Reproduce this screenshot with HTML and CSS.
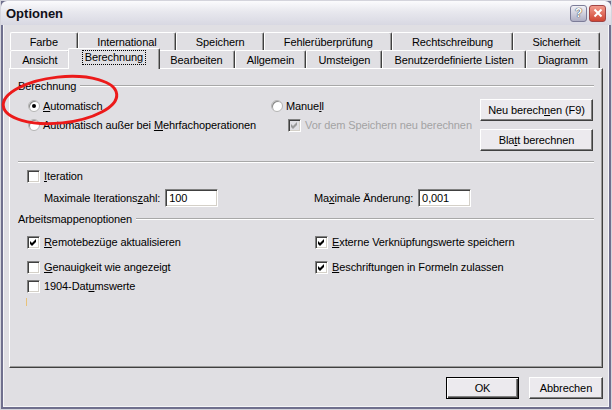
FILE: index.html
```html
<!DOCTYPE html>
<html lang="de">
<head>
  <meta charset="UTF-8">
  <meta name="viewport" content="width=device-width, initial-scale=1.0">
  <title>Optionen</title>
  <link rel="stylesheet" href="styles.css">
</head>
<body>
  <div class="window">
    <div class="titlebar">
      <span class="title">Optionen</span>
      <div class="title-buttons">
        <span class="tb-btn help">?</span>
        <span class="tb-btn close">
          <svg width="10" height="10" viewBox="0 0 10 10"><path d="M1.5 1.5 L8.5 8.5 M8.5 1.5 L1.5 8.5" stroke="#fff" stroke-width="2"/></svg>
        </span>
      </div>
    </div>

    <div class="dialog">
      <div class="tabs">
        <div class="tab-row">
          <div class="tab">Farbe</div>
          <div class="tab">International</div>
          <div class="tab">Speichern</div>
          <div class="tab">Fehlerüberprüfung</div>
          <div class="tab">Rechtschreibung</div>
          <div class="tab">Sicherheit</div>
        </div>
        <div class="tab-row">
          <div class="tab">Ansicht</div>
          <div class="tab active"><span class="focus">Berechnung</span></div>
          <div class="tab">Bearbeiten</div>
          <div class="tab">Allgemein</div>
          <div class="tab">Umsteigen</div>
          <div class="tab">Benutzerdefinierte Listen</div>
          <div class="tab">Diagramm</div>
        </div>
      </div>

      <div class="panel">
        <div class="group-title">Berechnung</div>
        <div class="calc">
          <div class="calc-left">
            <div class="opt"><span class="radio checked"></span><span><u>A</u>utomatisch</span></div>
            <div class="opt"><span class="radio"></span><span>Automatisch außer bei <u>M</u>ehrfachoperationen</span></div>
          </div>
          <div class="calc-mid">
            <div class="opt"><span class="radio"></span><span>Manue<u>l</u>l</span></div>
            <div class="opt sub disabled">
              <span class="check">
                <svg width="9" height="9" viewBox="0 0 9 9"><path d="M1 3 L3 5 L7 1 L7 4 L3 8 L1 6 Z"/></svg>
              </span>
              <span>Vor dem Speichern neu berechnen</span>
            </div>
          </div>
          <div class="calc-right">
            <div class="btn wide">Neu berech<u>n</u>en (F9)</div>
            <div class="btn wide">Bla<u>t</u>t berechnen</div>
          </div>
        </div>

        <div class="separator"></div>

        <div class="opt boxed iter"><span class="check"></span><span><u>I</u>teration</span></div>
        <div class="fields">
          <div class="field first"><span>Maximale Iterations<u>z</u>ahl:</span><span class="input">100</span></div>
          <div class="field"><span>Ma<u>x</u>imale Änderung:</span><span class="input">0,001</span></div>
        </div>

        <div class="group-title wb">Arbeitsmappenoptionen</div>
        <div class="opt-row r1">
          <div class="opt boxed">
            <span class="check"><svg width="9" height="9" viewBox="0 0 9 9"><path d="M1 3 L3 5 L7 1 L7 4 L3 8 L1 6 Z"/></svg></span>
            <span><u>R</u>emotebezüge aktualisieren</span>
          </div>
          <div class="opt boxed">
            <span class="check"><svg width="9" height="9" viewBox="0 0 9 9"><path d="M1 3 L3 5 L7 1 L7 4 L3 8 L1 6 Z"/></svg></span>
            <span><u>E</u>xterne Verknüpfungswerte speichern</span>
          </div>
        </div>
        <div class="opt-row r2">
          <div class="opt boxed"><span class="check"></span><span><u>G</u>enauigkeit wie angezeigt</span></div>
          <div class="opt boxed">
            <span class="check"><svg width="9" height="9" viewBox="0 0 9 9"><path d="M1 3 L3 5 L7 1 L7 4 L3 8 L1 6 Z"/></svg></span>
            <span><u>B</u>eschriftungen in Formeln zulassen</span>
          </div>
        </div>
        <div class="opt-row r3">
          <div class="opt boxed"><span class="check"></span><span>1904-Dat<u>u</u>mswerte</span></div>
        </div>
        <div class="caret"></div>
      </div>

      <div class="actions">
        <div class="btn default">OK</div>
        <div class="btn">Abbrechen</div>
      </div>
    </div>

    <svg class="highlight" width="612" height="410" viewBox="0 0 612 410">
      <ellipse cx="60" cy="100" rx="57" ry="23" transform="rotate(-6 60 100)" fill="none" stroke="#ec1a1a" stroke-width="3"/>
    </svg>
  </div>
</body>
</html>
```

FILE: styles.css
```css
body {
  margin: 0;
  font-family: "Liberation Sans", Arial, sans-serif;
  font-size: 11px;
  letter-spacing: -0.1px;
  color: #000;
  background-color: #ffffff;
}
u {
  text-underline-offset: 1px;
}
.window {
  position: relative;
  width: 612px;
  height: 410px;
  box-sizing: border-box;
  border: 1px solid #d4d4dc;
  background-color: #70708e;
  padding: 0 2px 2px;
  display: flex;
  flex-direction: column;
}
.titlebar {
  margin: 0 -2px;
  height: 24px;
  padding: 0 5px;
  display: flex;
  align-items: center;
  background: linear-gradient(#fbfbfd, #e8e8ee 45%, #d8d8e2);
  border-radius: 6px 6px 0 0;
}
.title {
  font-size: 13px;
  font-weight: bold;
  letter-spacing: 0;
  color: #101018;
}
.title-buttons {
  margin-left: auto;
  display: flex;
  gap: 2px;
}
.tb-btn {
  width: 15px;
  height: 15px;
  border-radius: 3px;
  display: flex;
  align-items: center;
  justify-content: center;
}
.help {
  background: linear-gradient(#f2f2f7, #aeaec4);
  border: 1px solid #7c7c98;
  color: #fff;
  font-weight: bold;
  font-size: 12px;
  text-shadow: 0 0 1px #333, 0 0 1px #333;
}
.close {
  background: linear-gradient(#f29a8c, #cf4432);
  border: 1px solid #a04444;
}
.dialog {
  flex: 1;
  background-color: #e0dfe3;
  border: 1px solid #f6f6f8;
  border-top: none;
  padding: 7px 5px 7px;
  display: flex;
  flex-direction: column;
}
.tabs {
  margin: 0 3px 0 1px;
}
.tab-row {
  display: flex;
  height: 18px;
}
.tab {
  flex: 1 1 auto;
  padding: 0 6px;
  text-align: center;
  line-height: 18px;
  border: 1px solid;
  border-color: #ffffff #404040 transparent #ffffff;
  border-bottom: none;
  border-radius: 2px 2px 0 0;
  box-shadow: inset -1px 0 #9a9a9a;
  background-color: #e0dfe3;
  white-space: nowrap;
}
.tab.active {
  position: relative;
  z-index: 1;
  margin: -2px -2px -1px;
  padding: 1px 8px 0;
  line-height: normal;
}
.focus {
  display: inline-block;
  border: 1px dotted #000;
  padding: 0 2px;
  line-height: 13px;
}
.panel {
  flex: 1;
  border: 1px solid;
  border-color: #ffffff #404040 #404040 #ffffff;
  box-shadow: inset -1px -1px #9a9a9a;
  padding: 10px 8px 0;
}
.group-title {
  display: flex;
  align-items: center;
  gap: 4px;
  height: 14px;
}
.group-title::after {
  content: "";
  flex: 1;
  border-top: 1px solid #a8a8a8;
  border-bottom: 1px solid #ffffff;
}
.group-title.wb {
  margin-top: 5px;
}
.calc {
  display: flex;
  margin-top: 6px;
}
.calc-left {
  width: 243px;
  padding-left: 10px;
}
.calc-mid {
  width: 209px;
}
.calc-right {
  width: 113px;
  display: flex;
  flex-direction: column;
  gap: 8px;
}
.opt {
  display: flex;
  align-items: center;
  height: 14px;
  gap: 4px;
  white-space: nowrap;
}
.calc .opt + .opt {
  margin-top: 5px;
}
.opt.sub {
  padding-left: 17px;
}
.opt.disabled {
  color: #a3a3a3;
}
.radio {
  width: 10px;
  height: 10px;
  border-radius: 50%;
  background-color: #ffffff;
  border: 1px solid #b4b4b4;
  box-shadow: inset 1px 1px #8a8a8a;
  display: flex;
  align-items: center;
  justify-content: center;
  margin-right: -1px;
}
.radio.checked::after {
  content: "";
  width: 4px;
  height: 4px;
  border-radius: 50%;
  background-color: #000;
}
.check {
  width: 11px;
  height: 11px;
  background-color: #ffffff;
  border: 1px solid;
  border-color: #808080 #ffffff #ffffff #808080;
  box-shadow: inset 1px 1px #404040, inset -1px -1px #d4d0c8;
  display: flex;
  align-items: center;
  justify-content: center;
}
.check svg {
  fill: #000;
}
.disabled .check {
  background-color: #e0dfe3;
}
.disabled .check svg {
  fill: #9a9a9a;
}
.btn {
  height: 20px;
  box-sizing: content-box;
  border: 1px solid;
  border-color: #ffffff #404040 #404040 #ffffff;
  box-shadow: inset -1px -1px #808080;
  background-color: #eceaee;
  display: flex;
  align-items: center;
  justify-content: center;
  width: 72px;
}
.btn.wide {
  width: 111px;
}
.btn.default {
  border-color: #000;
  box-shadow: inset 1px 1px #ffffff, inset -1px -1px #404040, inset -2px -2px #808080;
  width: 71px;
}
.separator {
  margin-top: 10px;
  border-top: 1px solid #a8a8a8;
  border-bottom: 1px solid #ffffff;
}
.boxed {
  padding-left: 9px;
}
.iter {
  margin-top: 6px;
}
.fields {
  display: flex;
  margin-top: 6px;
  padding-left: 26px;
}
.field {
  display: flex;
  align-items: center;
  gap: 3px;
}
.field.first {
  width: 270px;
}
.input {
  width: 48px;
  height: 16px;
  padding-left: 3px;
  display: flex;
  align-items: center;
  background-color: #ffffff;
  border: 1px solid;
  border-color: #808080 #ffffff #ffffff #808080;
  box-shadow: inset 1px 1px #404040, inset -1px -1px #d4d0c8;
}
.field .input {
  margin-left: 2px;
}
.opt-row {
  display: flex;
}
.opt-row .opt {
  width: 279px;
}
.opt-row.r1 {
  margin-top: 9px;
}
.opt-row.r2 {
  margin-top: 11px;
}
.opt-row.r3 {
  margin-top: 5px;
}
.caret {
  margin: 5px 0 0 8px;
  width: 1px;
  height: 8px;
  background-color: #e8c27a;
}
.actions {
  display: flex;
  justify-content: flex-end;
  gap: 10px;
  margin-top: 9px;
}
.highlight {
  position: absolute;
  left: -1px;
  top: -1px;
  pointer-events: none;
}
```
